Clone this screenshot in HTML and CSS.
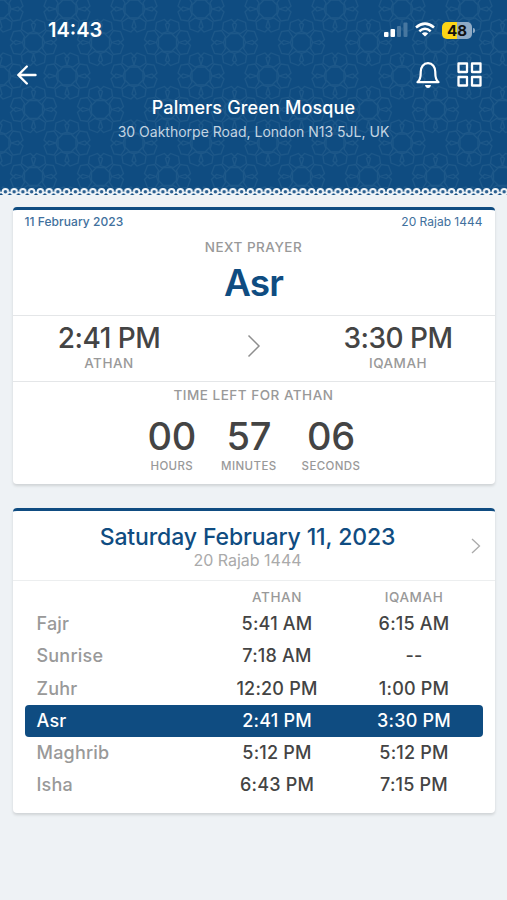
FILE: index.html
```html
<!DOCTYPE html>
<html lang="en">
<head>
    <meta charset="UTF-8">
    <meta name="viewport" content="width=device-width, initial-scale=1.0">
    <title>Palmers Green Mosque</title>
    <link rel="stylesheet" href="styles.css">
</head>
<body>
    <header class="header">
        <svg class="header-pattern" width="507" height="196" aria-hidden="true">
            <defs>
                <pattern id="stars" width="67" height="67" patternUnits="userSpaceOnUse" y="9">
                    <g fill="none" stroke="#3b7099" stroke-width="1.3">
                        <g id="rose">
                            <path d="M-4 -9h8l5 5v8l-5 5h-8l-5-5v-8z"/>
                            <path d="M11 0l7-2l5 5l-3 8l-7 1l-4-6zM11 0l7 2l5-5l-3-8l-7-1l-4 6z"/>
                            <path d="M-11 0l-7-2l-5 5l3 8l7 1l4-6zM-11 0l-7 2l-5-5l3-8l7-1l4 6z"/>
                            <path d="M0 11l-2 7l5 5l8-3l1-7l-6-4zM0 11l2 7l-5 5l-8-3l-1-7l6-4z"/>
                            <path d="M0 -11l-2-7l5-5l8 3l1 7l-6 4zM0 -11l2-7l-5-5l-8 3l-1 7l6 4z"/>
                        </g>
                        <use href="#rose" x="67"/>
                        <use href="#rose" y="67"/>
                        <use href="#rose" x="67" y="67"/>
                        <use href="#rose" x="33.5" y="33.5"/>
                    </g>
                </pattern>
                <pattern id="lace" width="8.75" height="10" patternUnits="userSpaceOnUse" x="1" y="187">
                    <path d="M0 5.600h8.750" stroke="#e6eef4" stroke-width="1.600"/>
                    <circle cx="4.400" cy="4.700" r="2.800" fill="#2c6090" stroke="#f2f6f9" stroke-width="2"/>
                </pattern>
            </defs>
            <rect width="507" height="188" fill="url(#stars)" opacity="0.320"/>
            <rect y="187" width="507" height="9" fill="url(#lace)"/>
        </svg>

        <div class="status-bar">
            <span class="clock">14:43</span>
            <div class="status-icons">
                <svg width="24" height="16" viewBox="0 0 24 16">
                    <rect x="0" y="10" width="4.500" height="5" rx="1" fill="#fff"/>
                    <rect x="6.500" y="7" width="4.500" height="8" rx="1" fill="#fff"/>
                    <rect x="13" y="4" width="4" height="11" rx="1" fill="#4777a0"/>
                    <rect x="19.500" y="0.500" width="4" height="14.500" rx="1" fill="#4777a0"/>
                </svg>
                <svg class="wifi" width="20" height="16" viewBox="0 0 20 16" fill="none" stroke="#fff" stroke-width="2.500">
                    <path d="M1 5.500Q10-2.200 19 5.500M4.300 9.300Q10 4.300 15.700 9.300"/>
                    <path d="M10 14.600L6.800 11.400Q10 8.900 13.200 11.400Z" fill="#fff" stroke="none"/>
                </svg>
                <span class="battery">48</span>
            </div>
        </div>

        <nav class="toolbar">
            <svg class="back" width="20" height="20" viewBox="0 0 20 20" fill="none" stroke="#fff" stroke-width="2.400" stroke-linecap="round" stroke-linejoin="round">
                <path d="M18.500 10H1.500M9.800 1.500L1.300 10L9.800 18.500"/>
            </svg>
            <div class="tools">
                <svg width="24" height="28" viewBox="0 0 24 28" fill="none" stroke="#fff" stroke-width="2.200" stroke-linejoin="round">
                    <path d="M1.500 21.200C5 18.500 4.700 14.500 4.700 11C4.700 6 7.500 2.200 12 2.200S19.300 6 19.300 11C19.300 14.500 19 18.500 22.500 21.200Z"/>
                    <path d="M9 24h6Q14.500 27 12 27T9 24Z" fill="#fff" stroke="none"/>
                </svg>
                <svg width="25" height="25" viewBox="0 0 25 25" fill="none" stroke="#fff" stroke-width="2.300" stroke-linejoin="round">
                    <rect x="1.500" y="1.500" width="8.500" height="8.500"/>
                    <rect x="15" y="1.500" width="8.500" height="8.500"/>
                    <rect x="1.500" y="15" width="8.500" height="8.500"/>
                    <rect x="15" y="15" width="8.500" height="8.500"/>
                </svg>
            </div>
        </nav>

        <h1 class="mosque">Palmers Green Mosque</h1>
        <p class="address">30 Oakthorpe Road, London N13 5JL, UK</p>
    </header>

    <main>
        <section class="card next-card">
            <div class="next">
                <div class="dates">
                    <span class="gregorian">11 February 2023</span>
                    <span class="hijri">20 Rajab 1444</span>
                </div>
                <div class="label">NEXT PRAYER</div>
                <h2 class="next-name">Asr</h2>
            </div>
            <div class="times">
                <div class="time-box">
                    <div class="time">2:41 PM</div>
                    <div class="label">ATHAN</div>
                </div>
                <svg class="chevron" width="14" height="24" viewBox="0 0 14 24" fill="none" stroke="#8e8e8e" stroke-width="1.500">
                    <path d="M1.500 1.500L12 12L1.500 22.500"/>
                </svg>
                <div class="time-box">
                    <div class="time">3:30 PM</div>
                    <div class="label">IQAMAH</div>
                </div>
            </div>
            <div class="countdown">
                <div class="label">TIME LEFT FOR ATHAN</div>
                <div class="units">
                    <div class="unit"><div class="number">00</div><div class="unit-label">HOURS</div></div>
                    <div class="unit"><div class="number">57</div><div class="unit-label">MINUTES</div></div>
                    <div class="unit"><div class="number">06</div><div class="unit-label">SECONDS</div></div>
                </div>
            </div>
        </section>

        <section class="card day-card">
            <div class="day-header">
                <div class="day-text">
                    <h2 class="day">Saturday February 11, 2023</h2>
                    <div class="day-hijri">20 Rajab 1444</div>
                </div>
                <svg class="day-chevron" width="10" height="16" viewBox="0 0 10 16" fill="none" stroke="#aaa" stroke-width="1.300">
                    <path d="M1 1L8.500 8L1 15"/>
                </svg>
            </div>
            <div class="schedule">
                <div class="row head"><span></span><span>ATHAN</span><span>IQAMAH</span></div>
                <div class="row"><span class="name">Fajr</span><span>5:41 AM</span><span>6:15 AM</span></div>
                <div class="row"><span class="name">Sunrise</span><span>7:18 AM</span><span>--</span></div>
                <div class="row"><span class="name">Zuhr</span><span>12:20 PM</span><span>1:00 PM</span></div>
                <div class="row active"><span class="name">Asr</span><span>2:41 PM</span><span>3:30 PM</span></div>
                <div class="row"><span class="name">Maghrib</span><span>5:12 PM</span><span>5:12 PM</span></div>
                <div class="row"><span class="name">Isha</span><span>6:43 PM</span><span>7:15 PM</span></div>
            </div>
        </section>
    </main>
</body>
</html>
```
FILE: styles.css
```css
/* General */
* {
    box-sizing: border-box;
}

body {
    margin: 0;
    min-height: 900px;
    background-color: #eef2f5;
    font-family: Inter, "Liberation Sans", sans-serif;
    color: #444;
}

h1, h2, p {
    margin: 0;
}

/* Header */
.header {
    position: relative;
    height: 195px;
    background-color: #0f4c81;
    color: #fff;
    text-align: center;
}

.header-pattern {
    position: absolute;
    top: 0;
    left: 0;
}

.status-bar,
.toolbar,
.mosque,
.address {
    position: relative;
}

.status-bar {
    display: flex;
    justify-content: space-between;
    align-items: center;
    height: 60px;
    padding: 0 32px 0 48px;
}

.clock {
    font-size: 20px;
    font-weight: 600;
}

.status-icons {
    display: flex;
    align-items: center;
}

.wifi {
    margin: 0 7px 0 7px;
}

.battery {
    position: relative;
    width: 30px;
    height: 17px;
    margin-right: 3px;
    border-radius: 5px;
    background: linear-gradient(to right, #fcd516 50%, #8fabc6 50%);
    color: #111;
    font-size: 15px;
    font-weight: 700;
    line-height: 17px;
}

.battery::after {
    content: "";
    position: absolute;
    top: 6px;
    right: -3px;
    width: 2px;
    height: 5px;
    border-radius: 0 2px 2px 0;
    background-color: #8fabc6;
}

.toolbar {
    display: flex;
    justify-content: space-between;
    align-items: center;
    height: 29px;
    padding: 0 25px 0 17px;
}

.tools {
    display: flex;
    align-items: center;
    gap: 17px;
}

.mosque {
    margin-top: 6px;
    font-size: 18px;
    font-weight: 500;
    line-height: 25px;
    letter-spacing: 0.15px;
}

.address {
    margin-top: 2px;
    color: #c3d4e2;
    font-size: 14px;
    font-weight: 400;
    line-height: 20px;
}

/* Cards */
.card {
    width: 482px;
    margin: 0 auto;
    border-top: 3px solid #0f4c81;
    border-radius: 4px;
    background-color: #fff;
    box-shadow: 0 2px 3px rgba(0, 0, 0, 0.13);
}

.label {
    color: #999;
    font-size: 13.5px;
    font-weight: 550;
    line-height: 17px;
    letter-spacing: 0.5px;
}

/* Next prayer */
.next-card {
    height: 277px;
    margin-top: 12px;
    text-align: center;
}

.next {
    height: 106px;
    border-bottom: 1px solid #e4e6e8;
}

.dates {
    display: flex;
    justify-content: space-between;
    padding: 4px 12px 0;
    color: #41709d;
    font-size: 12px;
    line-height: 16px;
}

.gregorian {
    font-weight: 500;
    letter-spacing: 0.05px;
}

.next .label {
    margin-top: 9px;
}

.next-name {
    margin-top: 5px;
    color: #0f4c81;
    font-size: 37px;
    font-weight: 600;
    line-height: 44px;
    letter-spacing: -0.9px;
}

.times {
    display: flex;
    justify-content: space-between;
    height: 66px;
    padding-top: 6px;
    border-bottom: 1px solid #e4e6e8;
}

.time-box {
    width: 193px;
}

.time {
    font-size: 28px;
    font-weight: 550;
    line-height: 33px;
    letter-spacing: -0.5px;
}

.chevron {
    margin-top: 12px;
}

.countdown {
    padding-top: 5px;
}

.units {
    display: flex;
    justify-content: center;
    gap: 25px;
    margin-top: 10px;
    padding-left: 1px;
}

.number {
    font-size: 38px;
    font-weight: 550;
    line-height: 44px;
    letter-spacing: -0.3px;
}

.unit-label {
    margin-top: 1px;
    color: #999;
    font-size: 11.5px;
    font-weight: 550;
    line-height: 14px;
    letter-spacing: 0.4px;
}

/* Day schedule */
.day-card {
    height: 305px;
    margin-top: 24px;
}

.day-header {
    position: relative;
    height: 70px;
    padding: 11px 12px 0 0;
    border-bottom: 1px solid #eceeef;
    text-align: center;
}

.day {
    color: #0f4c81;
    font-size: 23px;
    font-weight: 550;
    line-height: 30px;
    letter-spacing: -0.12px;
}

.day-hijri {
    color: #aaa;
    font-size: 16px;
    line-height: 17px;
}

.day-chevron {
    position: absolute;
    top: 27px;
    right: 14px;
}

.schedule {
    padding: 6px 12px 0;
}

.row {
    display: grid;
    grid-template-columns: 184px 137px 137px;
    height: 32.3px;
    border-radius: 4px;
    font-size: 18px;
    font-weight: 550;
    line-height: 32.4px;
    letter-spacing: 0.2px;
    text-align: center;
}

.head {
    height: 21px;
    color: #999;
    font-size: 13.5px;
    font-weight: 500;
    letter-spacing: 0.6px;
    line-height: 21px;
}

.name {
    padding-left: 12px;
    color: #999;
    text-align: left;
}

.active,
.active .name {
    color: #fff;
}

.active {
    background-color: #0f4c81;
}
```
